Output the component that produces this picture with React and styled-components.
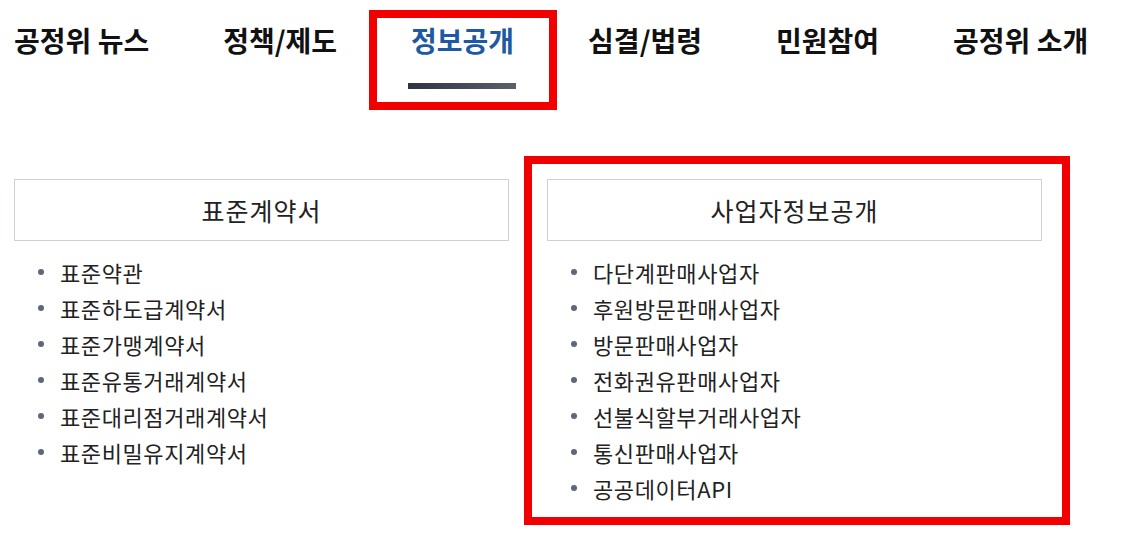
import React from "react";
import styled, { createGlobalStyle } from "styled-components";

const Global = createGlobalStyle`
  html, body { margin: 0; padding: 0; background: #fff; }
  body { font-family: "Noto Sans CJK KR", "Noto Sans", sans-serif; color: #222; }
  ul { margin: 0; padding: 0; list-style: none; }
`;

const Page = styled.div`
  width: 1126px;
  height: 533px;
  overflow: hidden;
  position: relative;
`;

const Nav = styled.nav`
  display: flex;
  gap: 74px;
  padding: 22px 0 0 14px;
  height: 108px;
  box-sizing: border-box;
`;

const NavItem = styled.div`
  position: relative;
  font-size: 28px;
  font-weight: 700;
  line-height: 36px;
  white-space: nowrap;
  color: ${(p) => (p.$active ? "#1d5aa3" : "#111")};
`;

const Underline = styled.span`
  position: absolute;
  left: -3px;
  right: -2px;
  top: 61px;
  height: 6px;
  background: linear-gradient(90deg, #2e3440, #5b606b);
`;

const Highlight = styled.span`
  position: absolute;
  box-sizing: border-box;
  border: 8px solid #f20000;
  pointer-events: none;
`;

const NavHighlight = styled(Highlight)`
  left: -42px;
  right: -43px;
  top: -12px;
  height: 100px;
`;

const Columns = styled.div`
  display: grid;
  grid-template-columns: 495px 495px;
  column-gap: 38px;
  padding: 71px 0 0 14px;
`;

const Column = styled.section`
  position: relative;
`;

const ColumnHighlight = styled(Highlight)`
  left: -23px;
  top: -23px;
  width: 546px;
  height: 369px;
`;

const Title = styled.h3`
  margin: 0;
  height: 62px;
  box-sizing: border-box;
  border: 1px solid #cdd0d4;
  display: flex;
  align-items: center;
  justify-content: center;
  font-size: 25px;
  letter-spacing: 1px;
  font-weight: 400;
  color: #222;
`;

const List = styled.ul`
  padding: 13px 0 0 24px;
`;

const Item = styled.li`
  display: flex;
  align-items: center;
  gap: 16px;
  height: 36px;
  font-size: 22px;
  letter-spacing: 0.6px;
  color: #222;
  white-space: nowrap;
  &::before {
    content: "";
    width: 6px;
    height: 6px;
    border-radius: 50%;
    background: #5d6778;
    flex: none;
  }
`;

const navItems = ["공정위 뉴스", "정책/제도", "정보공개", "심결/법령", "민원참여", "공정위 소개"];

const left = {
  title: "표준계약서",
  items: ["표준약관", "표준하도급계약서", "표준가맹계약서", "표준유통거래계약서", "표준대리점거래계약서", "표준비밀유지계약서"],
};
const right = {
  title: "사업자정보공개",
  items: ["다단계판매사업자", "후원방문판매사업자", "방문판매사업자", "전화권유판매사업자", "선불식할부거래사업자", "통신판매사업자", "공공데이터API"],
};

export default function App() {
  return (
    <Page>
      <Global />
      <Nav>
        {navItems.map((n) => (
          <NavItem key={n} $active={n === "정보공개"}>
            {n}
            {n === "정보공개" && (
              <>
                <Underline />
                <NavHighlight />
              </>
            )}
          </NavItem>
        ))}
      </Nav>
      <Columns>
        <Column>
          <Title>{left.title}</Title>
          <List>
            {left.items.map((i) => (
              <Item key={i}>{i}</Item>
            ))}
          </List>
        </Column>
        <Column>
          <ColumnHighlight />
          <Title>{right.title}</Title>
          <List>
            {right.items.map((i) => (
              <Item key={i}>{i}</Item>
            ))}
          </List>
        </Column>
      </Columns>
    </Page>
  );
}
